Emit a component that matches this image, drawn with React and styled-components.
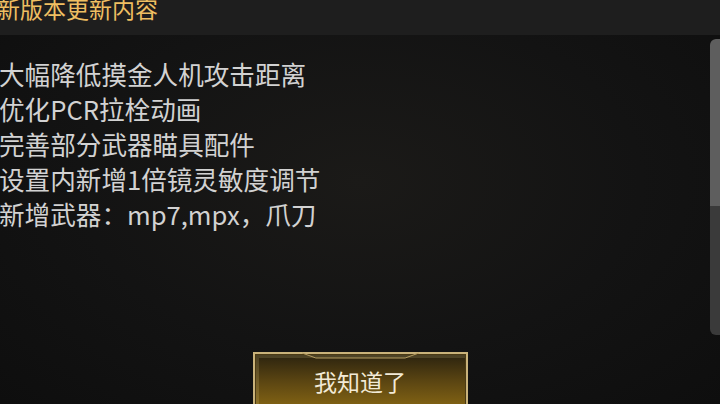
import styled, { createGlobalStyle } from 'styled-components';

const GlobalStyle = createGlobalStyle`
    html, body {
        margin: 0;
        padding: 0;
        width: 720px;
        height: 404px;
        overflow: hidden;
        background: #111111;
        font-family: "Noto Sans CJK SC", "Noto Sans", sans-serif;
    }
`;

const items = [
    '大幅降低摸金人机攻击距离',
    '优化PCR拉栓动画',
    '完善部分武器瞄具配件',
    '设置内新增1倍镜灵敏度调节',
    '新增武器：mp7,mpx，爪刀',
];

export default function App() {
    return (
        <>
            <GlobalStyle />
            <Panel>
                <Header>
                    <Title>新版本更新内容</Title>
                </Header>
                <Body>
                    <List>
                        {items.map(text => (
                            <Item key={text}>{text}</Item>
                        ))}
                    </List>
                    <Scrollbar>
                        <Thumb />
                    </Scrollbar>
                </Body>
                <Footer>
                    <OkButton>
                        <Notch viewBox="0 0 215 8" preserveAspectRatio="none">
                            <path d="M48 1 L62 6 L153 6 L167 1" fill="none" stroke="#b49c62" strokeWidth="1" />
                        </Notch>
                        我知道了
                    </OkButton>
                </Footer>
            </Panel>
        </>
    );
}

const Panel = styled.main`
    width: 720px;
    height: 404px;
    display: flex;
    flex-direction: column;
    background: radial-gradient(ellipse at 50% 45%, #1b1a18 0%, #131313 55%, #0e0e0e 100%);
    overflow: hidden;
`;

const Header = styled.header`
    height: 35px;
    flex-shrink: 0;
    background: #1e1e1e;
    display: flex;
    align-items: flex-start;
`;

const Title = styled.h1`
    margin: -5px 0 0 -3px;
    font-size: 23px;
    line-height: 26px;
    font-weight: 400;
    color: #efbf62;
    letter-spacing: 0;
`;

const Body = styled.section`
    height: 317px;
    flex-shrink: 0;
    display: flex;
`;

const List = styled.ul`
    flex: 1;
    list-style: none;
    margin: 0;
    padding: 21px 0 0 0;
    margin-left: -1px;
`;

const Item = styled.li`
    font-size: 25.6px;
    line-height: 35px;
    color: #d2d2d2;
    white-space: nowrap;
`;

const Scrollbar = styled.div`
    width: 10px;
    height: 296px;
    margin-top: 4px;
    background: #3a3a3a;
    border-radius: 6px 0 0 6px;
    overflow: hidden;
`;

const Thumb = styled.div`
    height: 167px;
    background: #5e5e5e;
    border-radius: 6px 0 0 0;
`;

const Footer = styled.footer`
    flex: 1;
    display: flex;
    justify-content: center;
`;

const OkButton = styled.button`
    position: relative;
    width: 215px;
    height: 64px;
    padding: 0 0 8px 0;
    border: 2px solid #c9b27a;
    border-bottom: none;
    box-shadow: inset 0 0 0 1px #4a3a14, inset 2px 2px 0 2px rgba(255, 235, 170, 0.15);
    background: linear-gradient(180deg, #2a220f 0%, #5c4612 45%, #906e14 100%);
    color: #f2ead6;
    font-family: "Noto Sans CJK SC", "Noto Sans", sans-serif;
    font-size: 23px;
    line-height: 30px;
    letter-spacing: 0;
`;

const Notch = styled.svg`
    position: absolute;
    top: -2px;
    left: 0;
    width: 100%;
    height: 8px;
`;
